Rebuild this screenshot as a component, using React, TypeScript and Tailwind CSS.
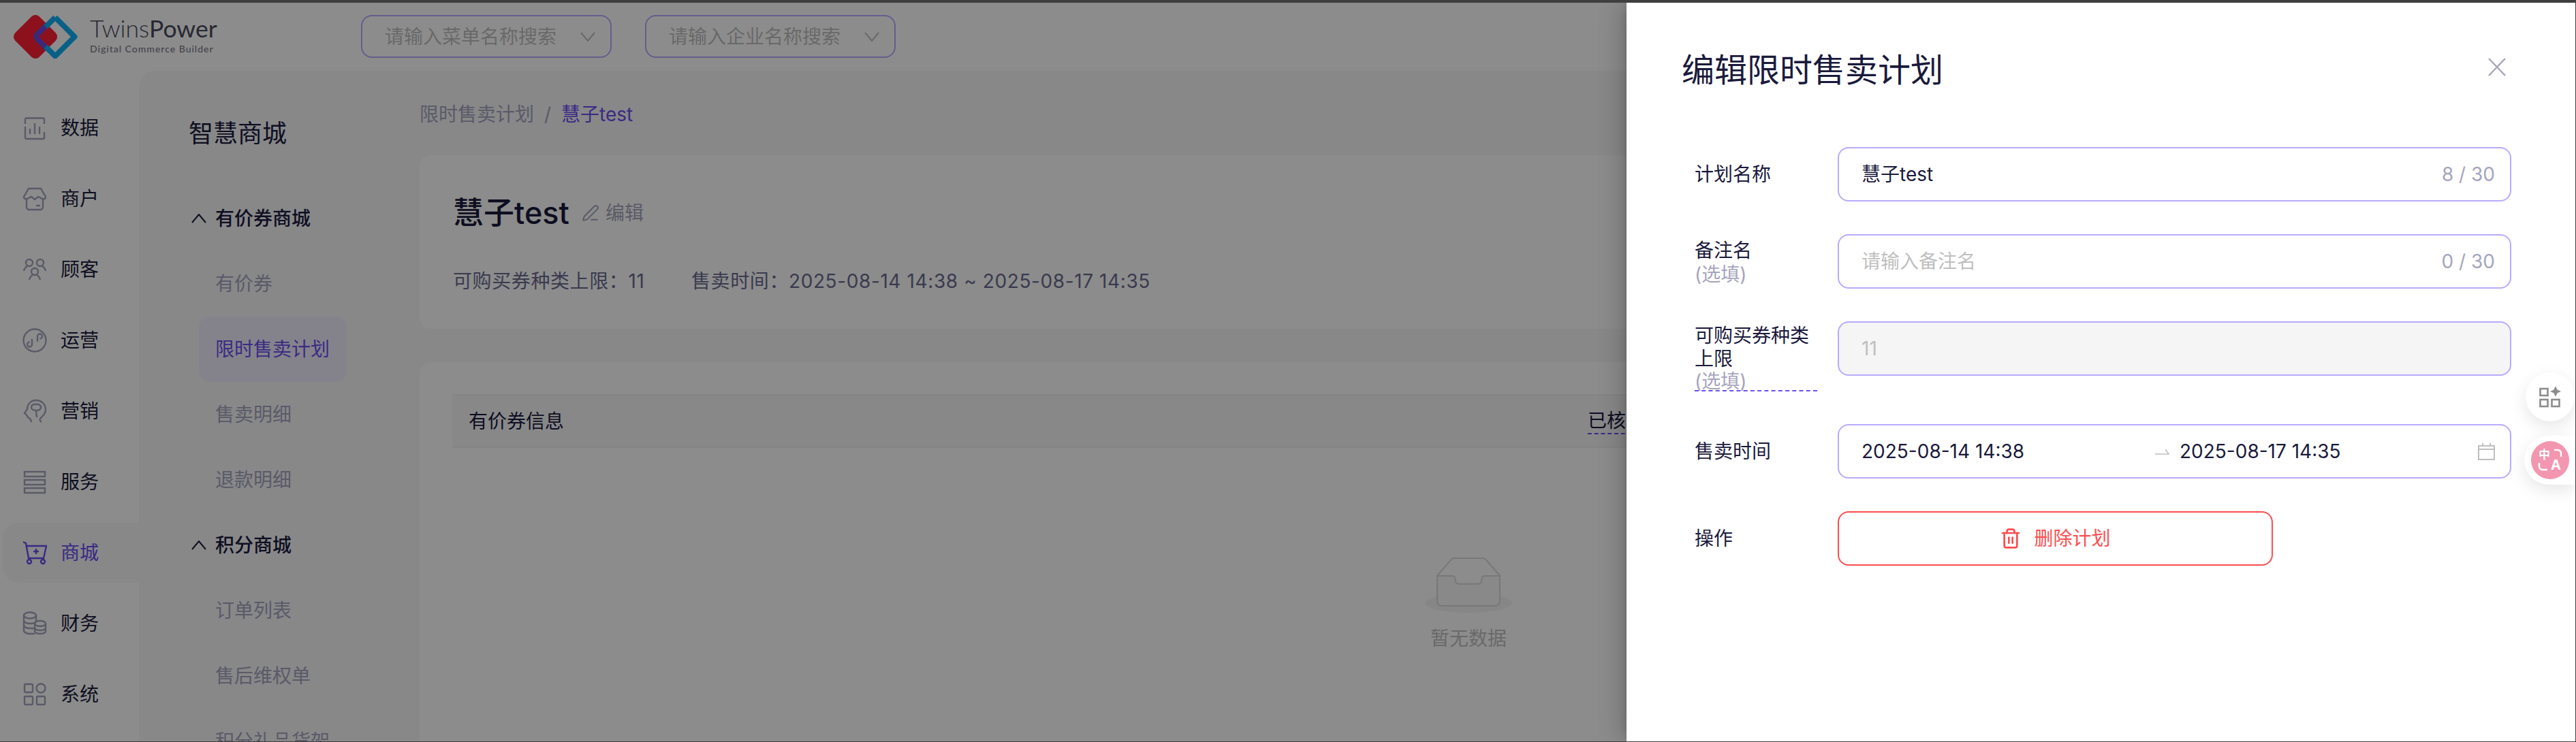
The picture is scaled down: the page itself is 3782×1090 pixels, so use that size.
import { Trash2, PenLine } from 'lucide-react';

const railIcons: Record<string, React.ReactNode> = {
  data: (
    <>
      <path d="M4 12V5.500A2 2 0 0 1 6 3.500H30A2 2 0 0 1 32 5.500V12M32 24V32A2 2 0 0 1 30 34H6A2 2 0 0 1 4 32V16" />
      <path d="M11 19V27M18 11V27M25 16V27" />
    </>
  ),
  store: (
    <>
      <path d="M9 3H27L34 15C34 19 30 19 27 17L23 15L18 19L13 15L9 17C6 19 2 19 2 15Z" />
      <path d="M6 18V30A4 4 0 0 0 10 34H26A4 4 0 0 0 30 30V18" />
      <path d="M20 28H26" />
    </>
  ),
  users: (
    <>
      <circle cx="10" cy="8" r="5" />
      <circle cx="26" cy="8" r="5" />
      <circle cx="18" cy="21" r="5" />
      <path d="M2 20C3 16 5 14 7 13M34 20C33 16 31 14 29 13M10 33C11 29 13 27 15 26M26 33C25 29 23 27 21 26" />
    </>
  ),
  link: (
    <>
      <circle cx="18" cy="18" r="16.500" />
      <path d="M14 16V24A3.500 3.500 0 1 1 10.500 20.500M22 20V12A3.500 3.500 0 1 1 25.500 15.500" />
    </>
  ),
  brain: (
    <>
      <path d="M12 34C14 31 11 29 8 27C6 25 7 23 3 21L7 15C7 7 13 2 20 2C28 2 34 8 34 16C34 23 28 26 26 29C25 31 26 33 28 34" />
      <path d="M14 15C11 10 16 7 20 8C25 7 29 11 26 15C24 18 21 15 20 19C20 22 21 24 21 27M14 15C16 17 18 17 20 16" />
    </>
  ),
  service: (
    <>
      <rect x="3" y="3" width="30" height="7" />
      <rect x="3" y="15" width="30" height="7" />
      <rect x="3" y="27" width="30" height="7" />
    </>
  ),
  cart: (
    <>
      <path d="M1 2L5 4L9 26H31L35 8H6" />
      <path d="M20 12V20M16 16H24" />
      <circle cx="10" cy="31" r="3" />
      <circle cx="30" cy="31" r="3" />
    </>
  ),
  coins: (
    <>
      <ellipse cx="11" cy="6" rx="9" ry="4.500" />
      <path d="M2 6V28C2 31 6 33 11 33H18M2 13C2 16 6 18 11 18S19 17 20 15M2 20C2 23 6 25 11 25H19M20 6V16" />
      <ellipse cx="26" cy="18" rx="8" ry="4" />
      <path d="M18 18V29C18 32 22 33 26 33S34 32 34 29V18M18 24C18 27 22 28 26 28S34 27 34 24" />
    </>
  ),
  apps: (
    <>
      <rect x="3" y="3" width="12" height="12" rx="1.500" />
      <circle cx="27" cy="9" r="6.500" />
      <rect x="3" y="21" width="12" height="12" rx="1.500" />
      <rect x="21" y="21" width="12" height="12" rx="1.500" />
    </>
  ),
};

const railItems = [
  { key: 'data', label: '数据' },
  { key: 'store', label: '商户' },
  { key: 'users', label: '顾客' },
  { key: 'link', label: '运营' },
  { key: 'brain', label: '营销' },
  { key: 'service', label: '服务' },
  { key: 'cart', label: '商城', active: true },
  { key: 'coins', label: '财务' },
  { key: 'apps', label: '系统' },
];

function Chevron({ up }: { up?: boolean }) {
  return (
    <svg width="22" height="14" viewBox="0 0 22 14" fill="none" stroke="currentColor" strokeWidth="2">
      <path d={up ? 'M1 13L11 1L21 13' : 'M1 1L11 13L21 1'} />
    </svg>
  );
}

function SearchSelect({ text }: { text: string }) {
  return (
    <div className="flex h-[63px] w-[368px] items-center justify-between rounded-[16px] border-2 border-[#b9aaff] bg-white pl-[33px] pr-[22px] text-[28px] text-[#bfbfbf]">
      <span>{text}</span>
      <Chevron />
    </div>
  );
}

function GroupTitle({ text }: { text: string }) {
  return (
    <div className="flex h-[96px] items-center pl-[77px] text-[28px] font-medium text-[#1a1a3c]">
      <span className="mr-[13px]">
        <Chevron up />
      </span>
      {text}
    </div>
  );
}

function SubItem({ text, active }: { text: string; active?: boolean }) {
  return (
    <div className="ml-[88px] h-[96px] w-[217px]">
      <div
        className={`flex h-full items-center rounded-[16px] pl-[24px] text-[28px] ${
          active ? 'bg-[#f1effe] text-[#6b4ef0]' : 'text-[#a5a5bd]'
        }`}
      >
        {text}
      </div>
    </div>
  );
}

function FormLabel({ text, sub, lineClass }: { text: string; sub?: boolean; lineClass: string }) {
  return (
    <div className={`mr-[30px] w-[180px] shrink-0 text-[28px] text-[#1a1a3c] ${lineClass}`}>
      {text}
      {sub && <div className="text-[28px] leading-[32px] text-[#a5a5bd]">(选填)</div>}
    </div>
  );
}

function TextField({ value, placeholder, count }: { value?: string; placeholder?: string; count: string }) {
  return (
    <div className="flex h-[80px] w-[989px] items-center justify-between rounded-[16px] border-2 border-[#b9aaff] bg-white pl-[33px] pr-[22px] text-[28px]">
      {value ? <span className="text-[#1a1a3c]">{value}</span> : <span className="text-[#bfbfbf]">{placeholder}</span>}
      <span className="text-[#a5a5bd]">{count}</span>
    </div>
  );
}

export default function App() {
  return (
    <div className="relative flex h-[1090px] w-[3782px] flex-col overflow-hidden border-t-4 border-r border-b border-[#3f3f3f] bg-white font-[Inter,'Noto_Sans_CJK_SC',sans-serif]">
      {/* header */}
      <div className="flex h-[100px] shrink-0 items-start pt-[18px]">
        <svg className="ml-[20px]" width="94" height="64" viewBox="0 0 94 64">
          <defs>
            <clipPath id="redDiamond">
              <rect x="7" y="7" width="50" height="50" rx="8" transform="rotate(45 32 32)" />
            </clipPath>
          </defs>
          <rect x="7" y="7" width="50" height="50" rx="8" fill="#ff1f35" transform="rotate(45 32 32)" />
          <g clipPath="url(#redDiamond)">
            <rect x="40" y="11" width="42" height="42" rx="5" fill="none" stroke="#6a4ce0" strokeWidth="8" transform="rotate(45 61 32)" />
          </g>
          <path d="M61 3.500L89.500 32L61 60.500L47 46.500M47 17.500L61 3.500" fill="none" stroke="#0fb0f5" strokeWidth="8" strokeLinejoin="round" />
        </svg>
        <div className="ml-[18px] flex w-[186px] flex-col font-['Lato',sans-serif] text-[#4a4a5c]">
          <div className="text-[35.5px] leading-[40px] font-light whitespace-nowrap">
            Twins<span className="font-normal">Power</span>
          </div>
          <div className="mt-[2px] text-[14px] leading-[16px] font-medium tracking-[1px] whitespace-nowrap text-[#7a7a88]">Digital Commerce Builder</div>
        </div>
        <div className="ml-[212px] flex gap-[49px]">
          <SearchSelect text="请输入菜单名称搜索" />
          <SearchSelect text="请输入企业名称搜索" />
        </div>
      </div>

      <div className="flex min-h-0 flex-1">
        {/* rail */}
        <div className="flex w-[204px] shrink-0 flex-col gap-[16px] pl-[4px] pt-[40px]">
          {railItems.map((item) => (
            <div
              key={item.key}
              className={`flex h-[88px] shrink-0 items-center gap-[20px] rounded-l-[24px] pl-[29px] text-[28px] ${
                item.active ? 'bg-[#f7f7fa] text-[#6b4ef0]' : 'text-[#1a1a3c]'
              }`}
            >
              <svg
                className={item.active ? 'text-[#6b4ef0]' : 'text-[#a5a5bd]'}
                width="36"
                height="36"
                viewBox="0 0 36 36"
                fill="none"
                stroke="currentColor"
                strokeWidth="2.400"
              >
                {railIcons[item.key]}
              </svg>
              {item.label}
            </div>
          ))}
        </div>

        {/* panel */}
        <div className="flex min-w-0 flex-1 rounded-tl-[24px] bg-[#f7f7fa]">
          <div className="w-[412px] shrink-0">
            <div className="h-[169px] pl-[73px] pt-[70px] text-[36px] leading-[44px] text-[#1a1a3c]">智慧商城</div>
            <GroupTitle text="有价券商城" />
            <SubItem text="有价券" />
            <SubItem text="限时售卖计划" active />
            <SubItem text="售卖明细" />
            <SubItem text="退款明细" />
            <GroupTitle text="积分商城" />
            <SubItem text="订单列表" />
            <SubItem text="售后维权单" />
            <SubItem text="积分礼品货架" />
          </div>

          <div className="flex w-[3080px] shrink-0 flex-col">
            <div className="flex h-[124px] shrink-0 items-start pt-[45px] text-[28px] leading-[38px] text-[#a5a5bd]">
              限时售卖计划
              <span className="mx-[15px]">/</span>
              <span className="text-[#6b4ef0]">慧子test</span>
            </div>
            <div className="h-[255px] shrink-0 rounded-[16px] bg-white px-[49px] pt-[57px]">
              <div className="flex h-[56px] items-center">
                <span className="text-[45px] font-medium text-[#1a1a3c]">慧子test</span>
                <PenLine className="ml-[18px] text-[#a5a5bd]" size={26} strokeWidth={1.800} />
                <span className="ml-[9px] text-[28px] text-[#a5a5bd]">编辑</span>
              </div>
              <div className="mt-[52px] flex h-[40px] items-center text-[28px] tracking-[0.6px] text-[#6b6b8f]">
                <span className="w-[350px]">可购买券种类上限：11</span>
                <span>售卖时间：2025-08-14 14:38 ~ 2025-08-17 14:35</span>
              </div>
            </div>
            <div className="mt-[49px] min-h-0 flex-1 rounded-t-[16px] bg-white px-[48px] pt-[47px]">
              <div className="flex h-[79px] items-center border-y-2 border-[#f0f0f0] bg-[#f7f7fa] pl-[24px] text-[28px] text-[#1a1a3c]">
                <span className="w-[1643px]">有价券信息</span>
                <span className="border-b-2 border-dashed border-[#6b4ef0] leading-[36px]">已核销</span>
              </div>
              <div className="mt-[160px] flex flex-col items-center">
                <svg width="128" height="82" viewBox="0 0 64 41">
                  <g transform="translate(0 1)" fill="none" fillRule="evenodd">
                    <ellipse fill="#f5f5f5" cx="32" cy="33" rx="32" ry="7" />
                    <g fillRule="nonzero" stroke="#d9d9d9">
                      <path d="M55 12.76L44.854 1.258C44.367.474 43.656 0 42.907 0H21.093c-.749 0-1.46.474-1.947 1.257L9 12.761V22h46v-9.24z" />
                      <path
                        d="M41.613 15.931c0-1.605.994-2.93 2.227-2.931H55v18.137C55 33.26 53.68 35 52.05 35h-40.1C10.32 35 9 33.259 9 31.137V13h11.16c1.233 0 2.227 1.323 2.227 2.928v.022c0 1.605 1.005 2.901 2.237 2.901h14.752c1.232 0 2.237-1.308 2.237-2.913v-.007z"
                        fill="#fafafa"
                      />
                    </g>
                  </g>
                </svg>
                <div className="mt-[18px] text-[28px] leading-[40px] text-[#bfbfbf]">暂无数据</div>
              </div>
            </div>
          </div>
        </div>
      </div>

      {/* mask */}
      <div className="absolute inset-0 bg-black/45" />

      {/* drawer */}
      <div className="absolute inset-y-0 left-[2388px] right-0 bg-white shadow-[-12px_0_32px_rgba(0,0,0,0.16),-6px_0_12px_-8px_rgba(0,0,0,0.24)]">
        <div className="flex h-[212px] items-start justify-between pl-[81px] pr-[102px] pt-[67px]">
          <div className="mt-[2px] text-[48px] leading-[60px] text-[#1a1a3c]">编辑限时售卖计划</div>
          <svg className="mt-[14px]" width="26" height="27" viewBox="0 0 26 27" fill="none" stroke="#a5a5bd" strokeWidth="2.400">
            <path d="M1 1L25 26M25 1L1 26" />
          </svg>
        </div>

        <div className="flex flex-col gap-[48px] pl-[100px]">
          <div className="flex h-[80px] items-center">
            <FormLabel text="计划名称" lineClass="leading-[38px]" />
            <TextField value="慧子test" count="8 / 30" />
          </div>
          <div className="flex h-[80px] items-center">
            <FormLabel text="备注名" sub lineClass="leading-[38px]" />
            <TextField placeholder="请输入备注名" count="0 / 30" />
          </div>
          <div className="flex h-[103px] items-start">
            <div className="mr-[30px] h-[103px] w-[180px] shrink-0 border-b-2 border-dashed border-[#6b4ef0] pt-[4px] text-[28px] leading-[34px] text-[#1a1a3c]">
              可购买券种类上限
              <div className="text-[28px] leading-[32px] text-[#a5a5bd]">(选填)</div>
            </div>
            <div className="flex h-[80px] w-[989px] items-center rounded-[16px] border-2 border-[#b9aaff] bg-[#f5f5f5] pl-[33px] text-[28px] text-[#bfbfbf]">
              11
            </div>
          </div>
          <div className="flex h-[80px] items-center">
            <FormLabel text="售卖时间" lineClass="leading-[38px]" />
            <div className="flex h-[80px] w-[989px] items-center rounded-[16px] border-2 border-[#b9aaff] bg-white pl-[33px] pr-[22px] text-[28px] text-[#1a1a3c]">
              <span className="w-[431px]">2025-08-14 14:38</span>
              <svg width="21" height="9" viewBox="0 0 21 9" fill="none" stroke="#bfbfbf" strokeWidth="1.600">
                <path d="M0 8H20L15 1" />
              </svg>
              <span className="ml-[15px] flex-1">2025-08-17 14:35</span>
              <svg width="25" height="26" viewBox="0 0 25 26" fill="none" stroke="#bfbfbf" strokeWidth="2">
                <path d="M1 5H24V25H1ZM1 10H24M7 1V5M18 1V5" />
              </svg>
            </div>
          </div>
          <div className="flex h-[80px] items-center">
            <FormLabel text="操作" lineClass="leading-[38px]" />
            <div className="flex h-[80px] w-[639px] items-center justify-center gap-[18px] rounded-[16px] border-2 border-[#ff4d4f] bg-white text-[28px] text-[#ff4d4f]">
              <Trash2 size={32} strokeWidth={2} />
              删除计划
            </div>
          </div>
        </div>
      </div>

      {/* floating tool buttons */}
      <div className="absolute right-[1px] top-[543px] flex h-[72px] w-[72px] items-center justify-center rounded-full bg-white shadow-[0_8px_24px_rgba(0,0,0,0.1)]">
        <svg width="32" height="32" viewBox="0 0 32 32" fill="none" stroke="#8c8c8c" strokeWidth="2.600">
          <rect x="1.500" y="4" width="11" height="10" />
          <rect x="1.500" y="20" width="11" height="10" />
          <rect x="18.500" y="20" width="11" height="10" />
          <path d="M24 0L26.500 5.500L32 8L26.500 10.500L24 16L21.500 10.500L16 8L21.500 5.500Z" fill="#8c8c8c" stroke="none" />
        </svg>
      </div>
      <div className="absolute right-0 top-[636px] flex h-[72px] w-[75px] items-center rounded-l-full bg-white pl-[10px] shadow-[0_8px_24px_rgba(0,0,0,0.1)]">
        <svg width="56" height="56" viewBox="0 0 56 56">
          <circle cx="28" cy="28" r="28" fill="#f396b0" />
          <text x="19.500" y="26" textAnchor="middle" fontSize="17" fontWeight="700" fill="#fff" fontFamily="'Noto Sans CJK SC',sans-serif">中</text>
          <text x="36.500" y="42" textAnchor="middle" fontSize="20" fontWeight="700" fill="#fff" fontFamily="Inter,sans-serif">A</text>
          <path d="M34 13H39A5 5 0 0 1 44 18V23M12 32V37A5 5 0 0 0 17 42H24" fill="none" stroke="#fff" strokeWidth="2.600" />
        </svg>
      </div>
    </div>
  );
}
